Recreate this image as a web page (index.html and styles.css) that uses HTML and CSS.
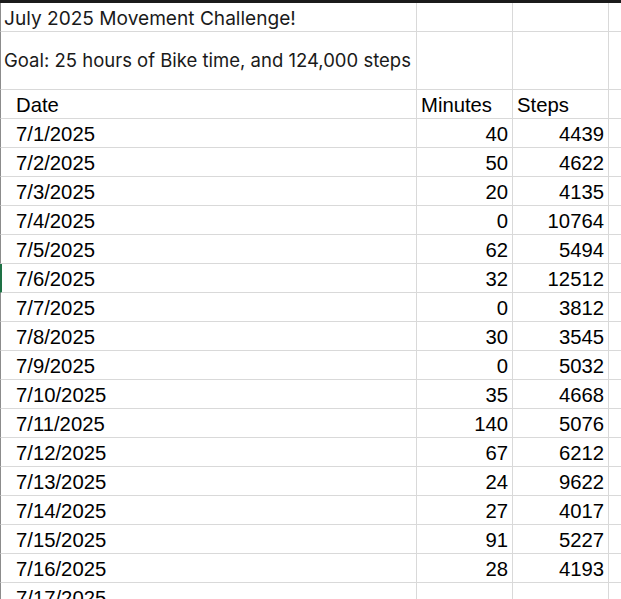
FILE: index.html
```html
<!DOCTYPE html>
<html>
<head>
<meta charset="utf-8">
<link rel="stylesheet" href="styles.css">
</head>
<body>
<div class="sheet">
  <div class="topbar"></div>
  <div class="grid">
    <div class="c a title">July 2025 Movement Challenge!</div><div class="c"></div><div class="c"></div><div class="c d"></div>
    <div class="c a goal">Goal: 25 hours of Bike time, and 124,000 steps</div><div class="c"></div><div class="c"></div><div class="c d"></div>
    <div class="c a data ind">Date</div><div class="c data">Minutes</div><div class="c data">Steps</div><div class="c d"></div>
    <div class="c a data ind">7/1/2025</div><div class="c data num">40</div><div class="c data num">4439</div><div class="c d"></div>
    <div class="c a data ind">7/2/2025</div><div class="c data num">50</div><div class="c data num">4622</div><div class="c d"></div>
    <div class="c a data ind">7/3/2025</div><div class="c data num">20</div><div class="c data num">4135</div><div class="c d"></div>
    <div class="c a data ind">7/4/2025</div><div class="c data num">0</div><div class="c data num">10764</div><div class="c d"></div>
    <div class="c a data ind">7/5/2025</div><div class="c data num">62</div><div class="c data num">5494</div><div class="c d"></div>
    <div class="c a data ind sel">7/6/2025</div><div class="c data num">32</div><div class="c data num">12512</div><div class="c d"></div>
    <div class="c a data ind">7/7/2025</div><div class="c data num">0</div><div class="c data num">3812</div><div class="c d"></div>
    <div class="c a data ind">7/8/2025</div><div class="c data num">30</div><div class="c data num">3545</div><div class="c d"></div>
    <div class="c a data ind">7/9/2025</div><div class="c data num">0</div><div class="c data num">5032</div><div class="c d"></div>
    <div class="c a data ind">7/10/2025</div><div class="c data num">35</div><div class="c data num">4668</div><div class="c d"></div>
    <div class="c a data ind">7/11/2025</div><div class="c data num">140</div><div class="c data num">5076</div><div class="c d"></div>
    <div class="c a data ind">7/12/2025</div><div class="c data num">67</div><div class="c data num">6212</div><div class="c d"></div>
    <div class="c a data ind">7/13/2025</div><div class="c data num">24</div><div class="c data num">9622</div><div class="c d"></div>
    <div class="c a data ind">7/14/2025</div><div class="c data num">27</div><div class="c data num">4017</div><div class="c d"></div>
    <div class="c a data ind">7/15/2025</div><div class="c data num">91</div><div class="c data num">5227</div><div class="c d"></div>
    <div class="c a data ind">7/16/2025</div><div class="c data num">28</div><div class="c data num">4193</div><div class="c d"></div>
    <div class="c a data ind">7/17/2025</div><div class="c data num"></div><div class="c data num"></div><div class="c d"></div>
  </div>
</div>
</body>
</html>
```

FILE: styles.css
```css
html, body {
  margin: 0;
  padding: 0;
  background: #ffffff;
}
body {
  width: 621px;
  height: 599px;
  overflow: hidden;
}
.sheet {
  width: 621px;
}
.topbar {
  height: 3px;
  background: #1b1b1b;
}
.grid {
  display: grid;
  grid-template-columns: 417px 96px 96px 1fr;
  grid-template-rows: 29px 58px;
  grid-auto-rows: 29px;
}
.c {
  box-sizing: border-box;
  border-right: 1px solid #d9d9d9;
  border-bottom: 1px solid #d9d9d9;
  white-space: nowrap;
  overflow: hidden;
  color: #000;
}
.d {
  border-right: none;
}
.a {
  border-left: 1px solid #8c8c8c;
}
.a.sel {
  border-left: 2px solid #1e7145;
}
.title, .goal {
  font-family: "Inter", "Noto Sans", sans-serif;
  font-size: 19.1px;
  color: #1a1a1a;
  padding-left: 3px;
}
.title {
  line-height: 26px;
  padding-top: 2px;
}
.goal {
  font-size: 18.5px;
  line-height: 57px;
}
.data {
  font-family: "Liberation Sans", Arial, sans-serif;
  font-size: 20.3px;
  line-height: 25px;
  padding-top: 3px;
  padding-left: 4px;
}
.ind {
  padding-left: 15px;
}
.sel.ind {
  padding-left: 14px;
}
.num {
  text-align: right;
  padding-right: 4px;
  padding-left: 0;
}
```
